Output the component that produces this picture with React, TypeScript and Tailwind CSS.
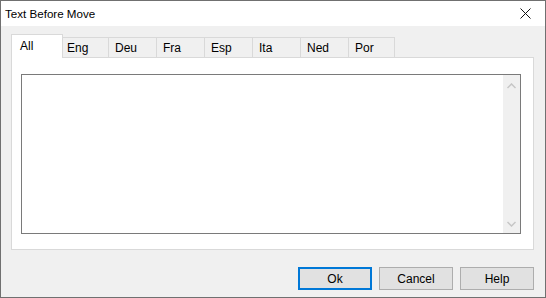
import React from "react";

const tabs = ["Eng", "Deu", "Fra", "Esp", "Ita", "Ned", "Por"];

function Chevron({ down }: { down?: boolean }) {
  return (
    <svg width="9" height="6" viewBox="0 0 9 6" className="block">
      <path
        d={down ? "M0.5 1 L4.5 5 L8.5 1" : "M0.5 5 L4.5 1 L8.5 5"}
        fill="none"
        stroke="#c6c6c6"
        strokeWidth="1.5"
      />
    </svg>
  );
}

export default function App() {
  return (
    <div className="w-[546px] h-[298px] border border-[#707070] bg-[#f0f0f0] flex flex-col font-['Liberation_Sans',sans-serif] text-[12px] text-black">
      {/* title bar */}
      <div className="h-[25px] bg-white flex items-center justify-between pl-[4px] pr-[14px]">
        <span className="leading-none text-[11.6px]">Text Before Move</span>
        <svg width="11" height="11" viewBox="0 0 11 11">
          <path d="M0.5 0.5 L10.5 10.5 M10.5 0.5 L0.5 10.5" stroke="#111" strokeWidth="1" />
        </svg>
      </div>

      <div className="flex-1 flex flex-col pt-[8px] pl-[10px] pr-[11px]">
        {/* tabs */}
        <div className="flex items-end h-[23px]">
          <div className="relative z-10 -mb-px w-[52px] h-[24px] bg-white border border-b-0 border-[#d9d9d9] pl-[8px] pt-[4px] leading-[14px]">
            All
          </div>
          {tabs.map((t, i) => (
            <div
              key={t}
              className={
                i === 0
                  ? "w-[46px] h-[20px] border-t border-r border-[#d9d9d9] pl-[4px] pt-[3px] leading-[14px]"
                  : i === tabs.length - 1
                  ? "w-[46px] h-[20px] border-t border-r border-[#d9d9d9] pl-[6px] pt-[3px] leading-[14px]"
                  : "w-[48px] h-[20px] border-t border-r border-[#d9d9d9] pl-[6px] pt-[3px] leading-[14px]"
              }
            >
              {t}
            </div>
          ))}
        </div>

        {/* panel */}
        <div className="h-[193px] bg-white border border-[#d9d9d9] pt-[16px] pl-[9px] pr-[12px]">
          <div className="h-[160px] border border-[#7a7a7a] flex justify-end">
            <div className="w-[17px] bg-[#f0f0f0] flex flex-col items-center justify-between pt-[8px] pb-[6px]">
              <Chevron />
              <Chevron down />
            </div>
          </div>
        </div>

        {/* buttons */}
        <div className="flex justify-end gap-[7px] mt-[17px]">
          <button className="w-[74px] h-[23px] bg-[#e1e1e1] border-2 border-[#0078d7] leading-none">
            Ok
          </button>
          <button className="w-[74px] h-[23px] bg-[#e1e1e1] border border-[#adadad] leading-none">
            Cancel
          </button>
          <button className="w-[74px] h-[23px] bg-[#e1e1e1] border border-[#adadad] leading-none">
            Help
          </button>
        </div>
      </div>
    </div>
  );
}
